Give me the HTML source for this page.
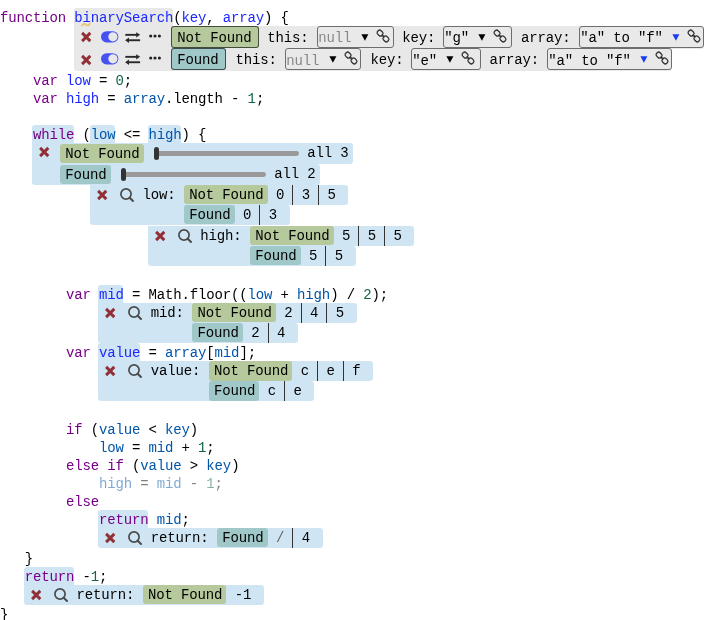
<!DOCTYPE html>
<html><head><meta charset="utf-8">
<style>
html,body{margin:0;padding:0;background:#fff;width:712px;height:620px;overflow:hidden;position:relative}
#wrap{position:absolute;left:0;top:0;width:712px;height:620px;will-change:transform}
body{font-family:"Liberation Mono",monospace;font-size:14px;letter-spacing:-0.1513px;color:#000}
.l{position:absolute;left:0;height:18px;line-height:18px;white-space:pre;padding-top:0.7px;box-sizing:border-box}
.k{color:#770088}.d{color:#1a28ff}.v{color:#0055aa}.n{color:#116644}.p{color:#000}
.hb{position:absolute;background:#cfe5f3;border-radius:3px 3px 0 0}
.hg{position:absolute;background:#e8e8e8;border-radius:3px 3px 0 0}
.r{position:absolute;background:#cfe5f3;white-space:pre;border-radius:0 3px 3px 0}
.rg{position:absolute;background:#e8e8e8;white-space:pre;border-radius:0 3px 3px 0}
.a{position:absolute}
.t{position:absolute;height:19px;line-height:19px;padding:0 4.2px 0 5px;border-radius:3px;padding-top:0.6px;box-sizing:border-box}
.nf{background:#b6c99c}
.fd{background:#a0c8c8}
.tx{position:absolute;line-height:20px;top:1px}
.sep{position:absolute;top:0;width:1px;background:#333}
svg{position:absolute;overflow:visible}
.bd{border:1px solid rgba(0,0,0,0.62)}
.dd{position:absolute;box-sizing:border-box;border:1px solid #6e6e6e;border-radius:3px;background:#e9e9e9}
.bar{position:absolute;height:4.8px;background:#999;border-radius:2.4px}
.hd{position:absolute;width:5.2px;height:12.6px;background:#333;border-radius:2.6px}
</style></head><body><div id="wrap">

<!-- function widget -->
<div class="hg" style="left:74px;top:8px;width:99px;height:18px"></div>

<div class="l" style="top:8px"><span class="k">function</span> <span class="d">binarySearch</span>(<span class="d">key</span>, <span class="d">array</span>) {</div>

<!-- while widget bgs -->
<div class="hb" style="left:32px;top:125px;width:42.25px;height:18px"></div>
<div class="hb" style="left:90.2px;top:125px;width:24.75px;height:18px"></div>
<div class="hb" style="left:147.95px;top:125px;width:33px;height:18px"></div>

<!-- mid widget bgs -->
<div class="hb" style="left:98.45px;top:285px;width:24.75px;height:18px"></div>
<!-- value widget bgs -->
<div class="hb" style="left:98.45px;top:343px;width:41.25px;height:18.5px"></div>
<!-- return mid -->
<div class="hb" style="left:98.45px;top:510px;width:49.5px;height:18px"></div>
<!-- return -1 -->
<div class="hb" style="left:24.2px;top:567px;width:49.5px;height:18px"></div>


<div class="r" style="left:90.2px;top:185px;width:258.30px;height:20px;border-radius:0 3px 3px 0"><svg style="left:6.9px;top:4.5px" width="10" height="10" viewBox="0 0 10 10"><path d="M1.1 0.9L9.3 9.1M9.3 0.9L1.1 9.1" stroke="#922f36" stroke-width="2.9"/></svg><svg style="left:29.9px;top:2.9px" width="14" height="14" viewBox="0 0 14 14"><circle cx="6" cy="6" r="5.1" fill="none" stroke="#4a4a4a" stroke-width="1.7"/><path d="M9.7 9.7L13 13" stroke="#4a4a4a" stroke-width="2" stroke-linecap="round"/></svg><div class="tx" style="left:52.25px;top:-0.5px">low: </div><div class="t nf" style="left:94.00px;top:0.2px;height:19.3px">Not Found</div><div class="tx" style="left:177.45px;top:-0.5px"> 0 </div><div class="sep" style="left:202.20px;height:20px"></div><div class="tx" style="left:203.20px;top:-0.5px"> 3 </div><div class="sep" style="left:227.95px;height:20px"></div><div class="tx" style="left:228.95px;top:-0.5px"> 5 </div></div>
<div class="r" style="left:90.2px;top:205px;width:199.55px;height:20px;border-radius:0 3px 3px 3px"><div class="t fd" style="left:94.00px;top:0.2px;height:19.3px">Found</div><div class="tx" style="left:144.45px;top:-0.5px"> 0 </div><div class="sep" style="left:169.20px;height:20px"></div><div class="tx" style="left:170.20px;top:-0.5px"> 3 </div></div>
<div class="r" style="left:147.95px;top:226px;width:266.55px;height:20px;border-radius:0 3px 3px 0"><svg style="left:6.9px;top:4.5px" width="10" height="10" viewBox="0 0 10 10"><path d="M1.1 0.9L9.3 9.1M9.3 0.9L1.1 9.1" stroke="#922f36" stroke-width="2.9"/></svg><svg style="left:29.9px;top:2.9px" width="14" height="14" viewBox="0 0 14 14"><circle cx="6" cy="6" r="5.1" fill="none" stroke="#4a4a4a" stroke-width="1.7"/><path d="M9.7 9.7L13 13" stroke="#4a4a4a" stroke-width="2" stroke-linecap="round"/></svg><div class="tx" style="left:52.25px;top:-0.5px">high: </div><div class="t nf" style="left:102.25px;top:0.2px;height:19.3px">Not Found</div><div class="tx" style="left:185.70px;top:-0.5px"> 5 </div><div class="sep" style="left:210.45px;height:20px"></div><div class="tx" style="left:211.45px;top:-0.5px"> 5 </div><div class="sep" style="left:236.20px;height:20px"></div><div class="tx" style="left:237.20px;top:-0.5px"> 5 </div></div>
<div class="r" style="left:147.95px;top:246px;width:207.80px;height:20px;border-radius:0 3px 3px 3px"><div class="t fd" style="left:102.25px;top:0.2px;height:19.3px">Found</div><div class="tx" style="left:152.70px;top:-0.5px"> 5 </div><div class="sep" style="left:177.45px;height:20px"></div><div class="tx" style="left:178.45px;top:-0.5px"> 5 </div></div>
<div class="r" style="left:98.45px;top:303px;width:258.30px;height:20px;border-radius:0 3px 3px 0"><svg style="left:6.9px;top:4.5px" width="10" height="10" viewBox="0 0 10 10"><path d="M1.1 0.9L9.3 9.1M9.3 0.9L1.1 9.1" stroke="#922f36" stroke-width="2.9"/></svg><svg style="left:29.9px;top:2.9px" width="14" height="14" viewBox="0 0 14 14"><circle cx="6" cy="6" r="5.1" fill="none" stroke="#4a4a4a" stroke-width="1.7"/><path d="M9.7 9.7L13 13" stroke="#4a4a4a" stroke-width="2" stroke-linecap="round"/></svg><div class="tx" style="left:52.25px;top:-0.5px">mid: </div><div class="t nf" style="left:94.00px;top:0.2px;height:19.3px">Not Found</div><div class="tx" style="left:177.45px;top:-0.5px"> 2 </div><div class="sep" style="left:202.20px;height:20px"></div><div class="tx" style="left:203.20px;top:-0.5px"> 4 </div><div class="sep" style="left:227.95px;height:20px"></div><div class="tx" style="left:228.95px;top:-0.5px"> 5 </div></div>
<div class="r" style="left:98.45px;top:323px;width:199.55px;height:20px;border-radius:0 3px 3px 3px"><div class="t fd" style="left:94.00px;top:0.2px;height:19.3px">Found</div><div class="tx" style="left:144.45px;top:-0.5px"> 2 </div><div class="sep" style="left:169.20px;height:20px"></div><div class="tx" style="left:170.20px;top:-0.5px"> 4 </div></div>
<div class="r" style="left:98.45px;top:361.2px;width:274.80px;height:20px;border-radius:0 3px 3px 0"><svg style="left:6.9px;top:4.5px" width="10" height="10" viewBox="0 0 10 10"><path d="M1.1 0.9L9.3 9.1M9.3 0.9L1.1 9.1" stroke="#922f36" stroke-width="2.9"/></svg><svg style="left:29.9px;top:2.9px" width="14" height="14" viewBox="0 0 14 14"><circle cx="6" cy="6" r="5.1" fill="none" stroke="#4a4a4a" stroke-width="1.7"/><path d="M9.7 9.7L13 13" stroke="#4a4a4a" stroke-width="2" stroke-linecap="round"/></svg><div class="tx" style="left:52.25px;top:-0.5px">value: </div><div class="t nf" style="left:110.50px;top:0.2px;height:19.3px">Not Found</div><div class="tx" style="left:193.95px;top:-0.5px"> c </div><div class="sep" style="left:218.70px;height:20px"></div><div class="tx" style="left:219.70px;top:-0.5px"> e </div><div class="sep" style="left:244.45px;height:20px"></div><div class="tx" style="left:245.45px;top:-0.5px"> f </div></div>
<div class="r" style="left:98.45px;top:381.2px;width:216.05px;height:20px;border-radius:0 3px 3px 3px"><div class="t fd" style="left:110.50px;top:0.2px;height:19.3px">Found</div><div class="tx" style="left:160.95px;top:-0.5px"> c </div><div class="sep" style="left:185.70px;height:20px"></div><div class="tx" style="left:186.70px;top:-0.5px"> e </div></div>
<div class="r" style="left:98.45px;top:528px;width:224.30px;height:20px;border-radius:0 3px 3px 3px"><svg style="left:6.9px;top:4.5px" width="10" height="10" viewBox="0 0 10 10"><path d="M1.1 0.9L9.3 9.1M9.3 0.9L1.1 9.1" stroke="#922f36" stroke-width="2.9"/></svg><svg style="left:29.9px;top:2.9px" width="14" height="14" viewBox="0 0 14 14"><circle cx="6" cy="6" r="5.1" fill="none" stroke="#4a4a4a" stroke-width="1.7"/><path d="M9.7 9.7L13 13" stroke="#4a4a4a" stroke-width="2" stroke-linecap="round"/></svg><div class="tx" style="left:52.25px;top:-0.5px">return: </div><div class="t fd" style="left:118.75px;top:0.2px;height:19.3px">Found</div><div class="tx" style="left:169.20px;top:-0.5px"> <span style="color:#666">/</span> </div><div class="sep" style="left:193.95px;height:20px"></div><div class="tx" style="left:194.95px;top:-0.5px"> 4 </div></div>
<div class="r" style="left:24.2px;top:585px;width:239.80px;height:20px;border-radius:0 3px 3px 3px"><svg style="left:6.9px;top:4.5px" width="10" height="10" viewBox="0 0 10 10"><path d="M1.1 0.9L9.3 9.1M9.3 0.9L1.1 9.1" stroke="#922f36" stroke-width="2.9"/></svg><svg style="left:29.9px;top:2.9px" width="14" height="14" viewBox="0 0 14 14"><circle cx="6" cy="6" r="5.1" fill="none" stroke="#4a4a4a" stroke-width="1.7"/><path d="M9.7 9.7L13 13" stroke="#4a4a4a" stroke-width="2" stroke-linecap="round"/></svg><div class="tx" style="left:52.25px;top:-0.5px">return: </div><div class="t nf" style="left:118.75px;top:0.2px;height:19.3px">Not Found</div><div class="tx" style="left:202.20px;top:-0.5px"> -1 </div></div>
<div class="rg" style="left:74px;top:26px;width:629.5px;height:22.5px;border-radius:0 3px 3px 0"><svg style="left:6.8px;top:6.4px" width="10" height="10" viewBox="0 0 10 10"><path d="M1.1 0.9L9.3 9.1M9.3 0.9L1.1 9.1" stroke="#922f36" stroke-width="2.9"/></svg><svg style="left:26.6px;top:4.7px" width="18" height="12" viewBox="0 0 18 12"><path fill-rule="evenodd" fill="#4452f2" d="M5.6 0.2H11.8A5.6 5.6 0 0 1 11.8 11.4H5.6A5.6 5.6 0 0 1 5.6 0.2ZM11.9 1.2A4.6 4.6 0 1 0 11.9 10.4A4.6 4.6 0 1 0 11.9 1.2Z"/></svg><svg style="left:51.2px;top:5.5px" width="16" height="12" viewBox="0 0 16 12"><g fill="#2a2a2a"><rect x="0.3" y="1.9" width="11.6" height="1.9"/><path d="M11.2 0.2L15.1 2.85L11.2 5.5Z"/><rect x="3.6" y="7.3" width="11.5" height="1.9"/><path d="M4 5.6L0.1 8.25L4 10.9Z"/></g></svg><svg style="left:75.2px;top:8.2px" width="13" height="5" viewBox="0 0 13 5"><g fill="#222"><circle cx="1.7" cy="2" r="1.55"/><circle cx="6" cy="2" r="1.55"/><circle cx="10.4" cy="2" r="1.55"/></g></svg><div class="t nf bd" style="left:97.3px;top:0px;height:21.7px;width:87.45px;line-height:19px;padding-top:1.5px">Not Found</div><div class="tx" style="left:193.20px;top:2px">this:</div><div class="dd" style="left:243.30px;top:0px;width:76.50px;height:21.6px"><div class="tx" style="left:0px;top:1.3px;color:#888">null</div><svg style="left:42.45px;top:6.9px" width="8" height="7" viewBox="0 0 8 7"><path d="M0.4 0.3H7.4L3.9 6.8Z" fill="#000"/></svg><svg style="left:57.35px;top:1.9px" width="14" height="14" viewBox="0 0 14 14"><g transform="rotate(-45 7 7)" fill="none" stroke="#333" stroke-width="1.25"><rect x="4.6" y="-0.1" width="4.8" height="5.9" rx="2"/><rect x="4.6" y="8.2" width="4.8" height="5.9" rx="2"/><path d="M7 5V9" stroke-width="1.7"/></g></svg></div><div class="tx" style="left:328.30px;top:2px">key:</div><div class="dd" style="left:369.30px;top:0px;width:69.10px;height:21.6px"><div class="tx" style="left:0px;top:1.3px;color:#000">"g"</div><svg style="left:34.2px;top:6.9px" width="8" height="7" viewBox="0 0 8 7"><path d="M0.4 0.3H7.4L3.9 6.8Z" fill="#000"/></svg><svg style="left:49.1px;top:1.9px" width="14" height="14" viewBox="0 0 14 14"><g transform="rotate(-45 7 7)" fill="none" stroke="#333" stroke-width="1.25"><rect x="4.6" y="-0.1" width="4.8" height="5.9" rx="2"/><rect x="4.6" y="8.2" width="4.8" height="5.9" rx="2"/><path d="M7 5V9" stroke-width="1.7"/></g></svg></div><div class="tx" style="left:447.00px;top:2px">array:</div><div class="dd" style="left:505.20px;top:0px;width:124.80px;height:21.6px"><div class="tx" style="left:0px;top:1.3px;color:#000">"a" to "f"</div><svg style="left:91.95px;top:6.9px" width="8" height="7" viewBox="0 0 8 7"><path d="M0.4 0.3H7.4L3.9 6.8Z" fill="#1a3cf0"/></svg><svg style="left:106.85px;top:1.9px" width="14" height="14" viewBox="0 0 14 14"><g transform="rotate(-45 7 7)" fill="none" stroke="#333" stroke-width="1.25"><rect x="4.6" y="-0.1" width="4.8" height="5.9" rx="2"/><rect x="4.6" y="8.2" width="4.8" height="5.9" rx="2"/><path d="M7 5V9" stroke-width="1.7"/></g></svg></div></div>
<div class="rg" style="left:74px;top:48.3px;width:597.5px;height:22.7px;border-radius:0 3px 3px 3px"><svg style="left:6.8px;top:6.4px" width="10" height="10" viewBox="0 0 10 10"><path d="M1.1 0.9L9.3 9.1M9.3 0.9L1.1 9.1" stroke="#922f36" stroke-width="2.9"/></svg><svg style="left:26.6px;top:4.7px" width="18" height="12" viewBox="0 0 18 12"><path fill-rule="evenodd" fill="#4452f2" d="M5.6 0.2H11.8A5.6 5.6 0 0 1 11.8 11.4H5.6A5.6 5.6 0 0 1 5.6 0.2ZM11.9 1.2A4.6 4.6 0 1 0 11.9 10.4A4.6 4.6 0 1 0 11.9 1.2Z"/></svg><svg style="left:51.2px;top:5.5px" width="16" height="12" viewBox="0 0 16 12"><g fill="#2a2a2a"><rect x="0.3" y="1.9" width="11.6" height="1.9"/><path d="M11.2 0.2L15.1 2.85L11.2 5.5Z"/><rect x="3.6" y="7.3" width="11.5" height="1.9"/><path d="M4 5.6L0.1 8.25L4 10.9Z"/></g></svg><svg style="left:75.2px;top:8.2px" width="13" height="5" viewBox="0 0 13 5"><g fill="#222"><circle cx="1.7" cy="2" r="1.55"/><circle cx="6" cy="2" r="1.55"/><circle cx="10.4" cy="2" r="1.55"/></g></svg><div class="t fd bd" style="left:97.3px;top:0px;height:21.7px;width:54.45px;line-height:19px;padding-top:1.5px">Found</div><div class="tx" style="left:161.60px;top:2px">this:</div><div class="dd" style="left:211.30px;top:0px;width:76.00px;height:21.6px"><div class="tx" style="left:0px;top:1.3px;color:#888">null</div><svg style="left:42.45px;top:6.9px" width="8" height="7" viewBox="0 0 8 7"><path d="M0.4 0.3H7.4L3.9 6.8Z" fill="#000"/></svg><svg style="left:57.35px;top:1.9px" width="14" height="14" viewBox="0 0 14 14"><g transform="rotate(-45 7 7)" fill="none" stroke="#333" stroke-width="1.25"><rect x="4.6" y="-0.1" width="4.8" height="5.9" rx="2"/><rect x="4.6" y="8.2" width="4.8" height="5.9" rx="2"/><path d="M7 5V9" stroke-width="1.7"/></g></svg></div><div class="tx" style="left:296.50px;top:2px">key:</div><div class="dd" style="left:337.30px;top:0px;width:69.40px;height:21.6px"><div class="tx" style="left:0px;top:1.3px;color:#000">"e"</div><svg style="left:34.2px;top:6.9px" width="8" height="7" viewBox="0 0 8 7"><path d="M0.4 0.3H7.4L3.9 6.8Z" fill="#000"/></svg><svg style="left:49.1px;top:1.9px" width="14" height="14" viewBox="0 0 14 14"><g transform="rotate(-45 7 7)" fill="none" stroke="#333" stroke-width="1.25"><rect x="4.6" y="-0.1" width="4.8" height="5.9" rx="2"/><rect x="4.6" y="8.2" width="4.8" height="5.9" rx="2"/><path d="M7 5V9" stroke-width="1.7"/></g></svg></div><div class="tx" style="left:415.60px;top:2px">array:</div><div class="dd" style="left:473.20px;top:0px;width:124.80px;height:21.6px"><div class="tx" style="left:0px;top:1.3px;color:#000">"a" to "f"</div><svg style="left:91.95px;top:6.9px" width="8" height="7" viewBox="0 0 8 7"><path d="M0.4 0.3H7.4L3.9 6.8Z" fill="#1a3cf0"/></svg><svg style="left:106.85px;top:1.9px" width="14" height="14" viewBox="0 0 14 14"><g transform="rotate(-45 7 7)" fill="none" stroke="#333" stroke-width="1.25"><rect x="4.6" y="-0.1" width="4.8" height="5.9" rx="2"/><rect x="4.6" y="8.2" width="4.8" height="5.9" rx="2"/><path d="M7 5V9" stroke-width="1.7"/></g></svg></div></div>
<div class="r" style="left:32px;top:143px;width:320.5px;height:21px;border-radius:0 3px 3px 0"><svg style="left:7.3px;top:4px" width="10" height="10" viewBox="0 0 10 10"><path d="M1.1 0.9L9.3 9.1M9.3 0.9L1.1 9.1" stroke="#922f36" stroke-width="2.9"/></svg><div class="t nf" style="left:28.2px;top:1px;height:18.6px;width:83.65px">Not Found</div><div class="bar" style="left:122.90px;top:8.2px;width:144.10px"></div><div class="hd" style="left:121.90px;top:4.2px"></div><div class="tx" style="left:267.00px;top:0.2px"> all 3</div></div>
<div class="r" style="left:32px;top:164px;width:287.6px;height:21px;border-radius:0 3px 3px 3px"><div class="t fd" style="left:28.2px;top:1px;height:18.6px;width:50.65px">Found</div><div class="bar" style="left:90.00px;top:8.2px;width:144.00px"></div><div class="hd" style="left:89.00px;top:4.2px"></div><div class="tx" style="left:234.00px;top:0.2px"> all 2</div></div>
<!-- code lines -->
<svg style="left:0;top:0" width="712" height="620"><path d="M82 25.6C83.3 23.4 84.6 23.4 86 24.8S88.6 25.8 90 23.4" fill="none" stroke="#e8c25e" stroke-width="1.5" stroke-linecap="round"/></svg>
<div class="l" style="top:71px">    <span class="k">var</span> <span class="d">low</span> = <span class="n">0</span>;</div>
<div class="l" style="top:89px">    <span class="k">var</span> <span class="d">high</span> = <span class="v">array</span>.length - <span class="n">1</span>;</div>
<div class="l" style="top:125px">    <span class="k">while</span> (<span class="v">low</span> &lt;= <span class="v">high</span>) {</div>
<div class="l" style="top:285px">        <span class="k">var</span> <span class="d">mid</span> = Math.floor((<span class="v">low</span> + <span class="v">high</span>) / <span class="n">2</span>);</div>
<div class="l" style="top:343px">        <span class="k">var</span> <span class="d">value</span> = <span class="v">array</span>[<span class="v">mid</span>];</div>
<div class="l" style="top:420px">        <span class="k">if</span> (<span class="v">value</span> &lt; <span class="v">key</span>)</div>
<div class="l" style="top:438px">            <span class="v">low</span> = <span class="v">mid</span> + <span class="n">1</span>;</div>
<div class="l" style="top:456px">        <span class="k">else</span> <span class="k">if</span> (<span class="v">value</span> &gt; <span class="v">key</span>)</div>
<div class="l" style="top:474px;opacity:0.5">            <span class="v">high</span> = <span class="v">mid</span> - <span class="n">1</span>;</div>
<div class="l" style="top:492px">        <span class="k">else</span></div>
<div class="l" style="top:510px">            <span class="k">return</span> <span class="v">mid</span>;</div>
<div class="l" style="top:549.3px">   }</div>
<div class="l" style="top:567px">   <span class="k">return</span> -<span class="n">1</span>;</div>
<div class="l" style="top:605px">}</div>

</div></body></html>
